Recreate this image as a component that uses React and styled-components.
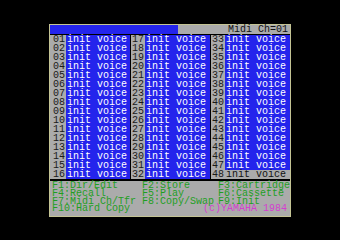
import React from "react";
import styled, { createGlobalStyle } from "styled-components";

const Global = createGlobalStyle`
  html, body { margin: 0; padding: 0; background: #000; }
  body { width: 340px; height: 240px; overflow: hidden; }
`;

const Screen = styled.div`
  width: 340px;
  height: 240px;
  box-sizing: border-box;
  padding: 24px 0 0 49px;
  background: #000;
  font-family: "Liberation Mono", "DejaVu Sans Mono", monospace;
  font-size: 10px;
`;

const Panel = styled.div`
  width: 242px;
  box-sizing: border-box;
  border: 1px solid #c4c494;
  background: #000;
  display: flex;
  flex-direction: column;
`;

const Header = styled.div`
  display: grid;
  grid-template-columns: 128px 1fr;
  height: 9px;
  margin-bottom: 1px;
`;

const HeaderBlue = styled.div`
  background: #2424ec;
`;

const HeaderGray = styled.div`
  background: #ababab;
  color: #111;
  text-align: right;
  padding-right: 2px;
  line-height: 9px;
  white-space: pre;
`;

const Grid = styled.div`
  display: grid;
  grid-template-columns: 80px 79px 79px;
  column-gap: 1px;
`;

const Column = styled.div`
  display: flex;
  flex-direction: column;
`;

const Row = styled.div`
  display: grid;
  grid-template-columns: ${(p) => p.$num}px 1fr;
  height: 9px;
  line-height: 9px;
  white-space: pre;
`;

const Num = styled.span`
  background: #ababab;
  color: #1a1a1a;
  text-align: right;
  padding-right: 1px;
`;

const Name = styled.span`
  background: ${(p) => (p.$sel ? "#ababab" : "#2424ec")};
  color: ${(p) => (p.$sel ? "#111" : "#fff")};
  padding-left: 1px;
`;

const Keys = styled.div`
  margin-top: 2px;
  background: #ababab;
  padding: 1px 0 3px 2px;
  display: grid;
  grid-template-columns: 90px 76px 1fr;
  grid-auto-rows: 7.75px;
  line-height: 7.75px;
  color: #1f9f1f;
  white-space: pre;
`;

const Key = styled.span``;

const Copyright = styled.span`
  grid-column: 2 / 4;
  padding-left: 61px;
  color: #d43fcf;
`;

const pad = (n) => String(n).padStart(2, "0");

const columns = [
  { start: 1, num: 16 },
  { start: 17, num: 14 },
  { start: 33, num: 14 },
];

export default function App() {
  return (
    <Screen>
      <Global />
      <Panel>
        <Header>
          <HeaderBlue />
          <HeaderGray>Midi Ch=01</HeaderGray>
        </Header>
        <Grid>
          {columns.map((c) => (
            <Column key={c.start}>
              {Array.from({ length: 16 }, (_, i) => {
                const n = c.start + i;
                return (
                  <Row key={n} $num={c.num}>
                    <Num>{pad(n)}</Num>
                    <Name $sel={n === 48}>init voice</Name>
                  </Row>
                );
              })}
            </Column>
          ))}
        </Grid>
        <Keys>
          <Key>F1:Dir/Edit</Key>
          <Key>F2:Store</Key>
          <Key>F3:Cartridge</Key>
          <Key>F4:Recall</Key>
          <Key>F5:Play</Key>
          <Key>F6:Cassette</Key>
          <Key>F7:Midi Ch/Tfr</Key>
          <Key>F8:Copy/Swap</Key>
          <Key>F9:Init</Key>
          <Key>F10:Hard Copy</Key>
          <Copyright>(c)YAMAHA 1984</Copyright>
        </Keys>
      </Panel>
    </Screen>
  );
}
